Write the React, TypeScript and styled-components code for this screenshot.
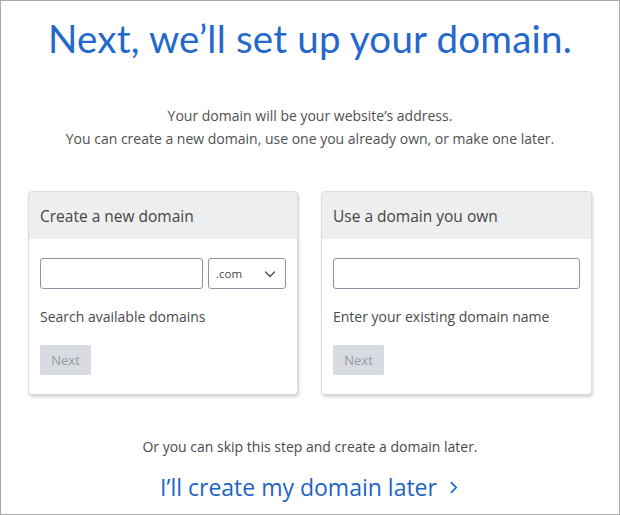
import React from 'react'
import styled, { createGlobalStyle } from 'styled-components'

const GlobalStyle = createGlobalStyle`
  html, body {
    margin: 0;
    padding: 0;
    background: #ffffff;
  }
  * {
    box-sizing: border-box;
  }
`

const Frame = styled.div`
  width: 620px;
  height: 515px;
  border: 1px solid #a8a8a8;
  background: #ffffff;
  display: flex;
  flex-direction: column;
  align-items: center;
  font-family: 'Open Sans', 'Liberation Sans', sans-serif;
  color: #4a4a4a;
`

const Title = styled.h1`
  margin: 13px 0 0;
  font-family: 'Lato', 'Open Sans', sans-serif;
  font-weight: 400;
  font-size: 38.5px;
  line-height: 48px;
  color: #2468cc;
  letter-spacing: 0.2px;
`

const Intro = styled.p`
  margin: 42px 0 0;
  font-size: 14px;
  line-height: 23px;
  text-align: center;
  color: #505050;
`

const Cards = styled.div`
  display: grid;
  grid-template-columns: 270px 271px;
  gap: 23px;
  margin-top: 41px;
`

const Card = styled.section`
  border: 1px solid #dcdcdc;
  border-radius: 4px;
  box-shadow: 1px 2px 3px rgba(0, 0, 0, 0.18);
  overflow: hidden;
  background: #ffffff;
`

const CardHeader = styled.header`
  height: 47px;
  background: #eeeeee;
  padding: 0 11px;
  display: flex;
  align-items: center;
  font-size: 15.5px;
  color: #454545;
`

const CardBody = styled.div`
  padding: 19px 11px 19px;
  display: flex;
  flex-direction: column;
`

const FieldRow = styled.div`
  display: flex;
  gap: 5px;
`

const TextInput = styled.input<{ $grow?: boolean }>`
  height: 31px;
  flex: ${(p) => (p.$grow ? '1' : 'none')};
  width: ${(p) => (p.$grow ? 'auto' : '163px')};
  min-width: 0;
  border: 1px solid #8c95a5;
  border-radius: 3px;
  padding: 0 8px;
  font: inherit;
  outline: none;
`

const Select = styled.div`
  width: 79px;
  height: 31px;
  border: 1px solid #8c95a5;
  border-radius: 3px;
  display: flex;
  align-items: center;
  justify-content: space-between;
  padding: 0 9px 0 7px;
  font-size: 11.5px;
  color: #444;
`

const Hint = styled.div`
  margin-top: 18px;
  font-size: 14px;
  line-height: 20px;
  color: #4a4a4a;
`

const NextButton = styled.button`
  margin-top: 18px;
  align-self: flex-start;
  width: 51px;
  height: 30px;
  border: none;
  border-radius: 2px;
  background: #d8dce2;
  color: #9a9a9a;
  font-family: inherit;
  font-size: 13px;
  padding: 0;
`

const SkipText = styled.p`
  margin: 42px 0 0;
  font-size: 14px;
  line-height: 20px;
  color: #4a4a4a;
`

const LaterLink = styled.a`
  margin-top: 15px;
  display: flex;
  align-items: center;
  gap: 10px;
  font-size: 23px;
  line-height: 30px;
  color: #1f63c6;
  text-decoration: none;
`

const Chevron = ({ dir, size, stroke }: { dir: 'down' | 'right'; size: number; stroke: number }) => (
  <svg width={size} height={size} viewBox="0 0 12 12" fill="none">
    <path
      d={dir === 'down' ? 'M1.5 4 L6 8.5 L10.5 4' : 'M4 1.5 L8.5 6 L4 10.5'}
      stroke="currentColor"
      strokeWidth={stroke}
      strokeLinecap="round"
      strokeLinejoin="round"
    />
  </svg>
)

export default function App() {
  return (
    <>
      <GlobalStyle />
      <Frame>
        <Title>Next, we’ll set up your domain.</Title>
        <Intro>
          Your domain will be your website’s address.
          <br />
          You can create a new domain, use one you already own, or make one later.
        </Intro>
        <Cards>
          <Card>
            <CardHeader>Create a new domain</CardHeader>
            <CardBody>
              <FieldRow>
                <TextInput />
                <Select>
                  <span>.com</span>
                  <Chevron dir="down" size={12} stroke={1.2} />
                </Select>
              </FieldRow>
              <Hint>Search available domains</Hint>
              <NextButton disabled>Next</NextButton>
            </CardBody>
          </Card>
          <Card>
            <CardHeader>Use a domain you own</CardHeader>
            <CardBody>
              <FieldRow>
                <TextInput $grow />
              </FieldRow>
              <Hint>Enter your existing domain name</Hint>
              <NextButton disabled>Next</NextButton>
            </CardBody>
          </Card>
        </Cards>
        <SkipText>Or you can skip this step and create a domain later.</SkipText>
        <LaterLink href="#">
          I’ll create my domain later
          <Chevron dir="right" size={13} stroke={1.6} />
        </LaterLink>
      </Frame>
    </>
  )
}
